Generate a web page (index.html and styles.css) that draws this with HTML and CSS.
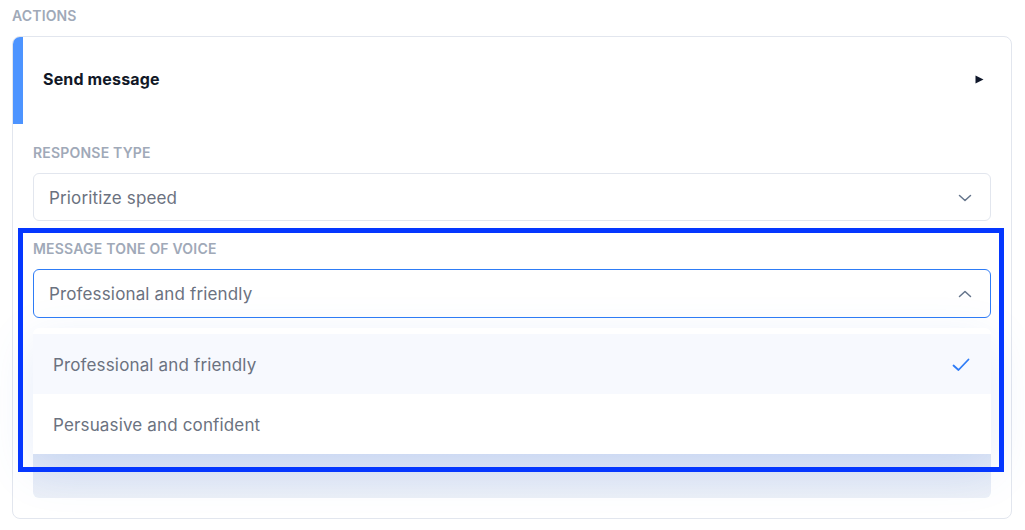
FILE: index.html
```html
<!DOCTYPE html>
<html lang="en">
<head>
    <meta charset="UTF-8">
    <meta name="viewport" content="width=device-width, initial-scale=1.0">
    <title>Actions</title>
    <link rel="stylesheet" href="styles.css">
</head>
<body>
<div class="page">
    <div class="section-title">Actions</div>

    <!-- Action card -->
    <div class="card">
        <div class="card-header">
            <span class="card-title">Send message</span>
            <svg class="caret" width="9" height="9" viewBox="0 0 9 9"><path d="M0.5 0.5L8.5 4.5L0.5 8.5Z" fill="#0f172a"/></svg>
        </div>
        <div class="card-body">
            <div class="field">
                <label class="field-label">Response type</label>
                <div class="select">
                    <span>Prioritize speed</span>
                    <svg class="chevron" width="14" height="8" viewBox="0 0 14 8"><path d="M1.5 1.5L7 6.5L12.5 1.5" fill="none" stroke="#64748b" stroke-width="1.5" stroke-linecap="round" stroke-linejoin="round"/></svg>
                </div>
            </div>

            <div class="field">
                <label class="field-label">Message tone of voice</label>
                <div class="select open">
                    <span>Professional and friendly</span>
                    <svg class="chevron" width="14" height="8" viewBox="0 0 14 8"><path d="M1.5 6.5L7 1.5L12.5 6.5" fill="none" stroke="#64748b" stroke-width="1.5" stroke-linecap="round" stroke-linejoin="round"/></svg>
                </div>
                <ul class="menu">
                    <li class="selected">
                        <span>Professional and friendly</span>
                        <svg width="18" height="14" viewBox="0 0 18 14"><path d="M1.5 7.5L6.5 12L16.5 1.5" fill="none" stroke="#2f7cf6" stroke-width="1.8" stroke-linecap="round" stroke-linejoin="round"/></svg>
                    </li>
                    <li><span>Persuasive and confident</span></li>
                </ul>
                <div class="menu-shade"></div>
            </div>
        </div>
    </div>

    <!-- Highlight frame over the open field -->
    <div class="highlight"></div>
</div>
</body>
</html>
```

FILE: styles.css
```css
body {
    margin: 0;
    padding: 0;
    font-family: 'Inter', 'Noto Sans', sans-serif;
    background: #fff;
    color: #111827;
}

.page {
    position: relative;
    padding: 8px 13px 0 12px;
}

.section-title {
    font-size: 14px;
    line-height: 16px;
    font-weight: 600;
    letter-spacing: 0.15px;
    text-transform: uppercase;
    color: #a0a9b8;
    margin-bottom: 12px;
}

.card {
    width: 1000px;
    box-sizing: border-box;
    border: 1px solid #e2e6ee;
    border-radius: 8px;
}

.card-header {
    position: relative;
    height: 87px;
    box-sizing: border-box;
    display: flex;
    align-items: center;
    justify-content: space-between;
    padding: 0 27px 3px 30px;
}

.card-header::before {
    content: "";
    position: absolute;
    left: 0;
    top: 0;
    bottom: 0;
    width: 10px;
    border-top-left-radius: 7px;
    background: #4d94ff;
}

.card-title {
    font-size: 16px;
    font-weight: 700;
    letter-spacing: 0.15px;
    color: #111827;
}

.card-body {
    padding: 21px 20px 20px;
    display: flex;
    flex-direction: column;
    gap: 20px;
}

.field-label {
    display: block;
    font-size: 14px;
    line-height: 16px;
    font-weight: 600;
    letter-spacing: 0.2px;
    text-transform: uppercase;
    color: #a0a9b8;
    margin-bottom: 12px;
}

.select {
    height: 48px;
    box-sizing: border-box;
    border: 1px solid #e2e6ee;
    border-radius: 6px;
    display: flex;
    align-items: center;
    justify-content: space-between;
    padding: 1px 18px 0 15px;
    font-size: 17px;
    letter-spacing: 0.15px;
    color: #6b7280;
}

.select.open {
    height: 49px;
    border-color: #2e7cf6;
}

.menu {
    list-style: none;
    margin: 10px 0 0;
    padding: 6px 0 0;
    background: #fff;
    border-radius: 6px 6px 0 0;
    box-shadow: 0 14px 48px rgba(80, 130, 220, 0.15);
    position: relative;
}

.menu li {
    height: 60px;
    box-sizing: border-box;
    display: flex;
    align-items: center;
    justify-content: space-between;
    padding: 2px 21px 0 20px;
    font-size: 17px;
    letter-spacing: 0.15px;
    color: #6b7280;
}

.menu li.selected {
    background: #f7f9fe;
}

.menu-shade {
    height: 44px;
    border-radius: 0 0 6px 6px;
    background: linear-gradient(180deg, #dee6f6, #ecf0f7);
}

.highlight {
    position: absolute;
    left: 18px;
    top: 228px;
    width: 986px;
    height: 244px;
    box-sizing: border-box;
    border: 5px solid #0537ff;
}
```
